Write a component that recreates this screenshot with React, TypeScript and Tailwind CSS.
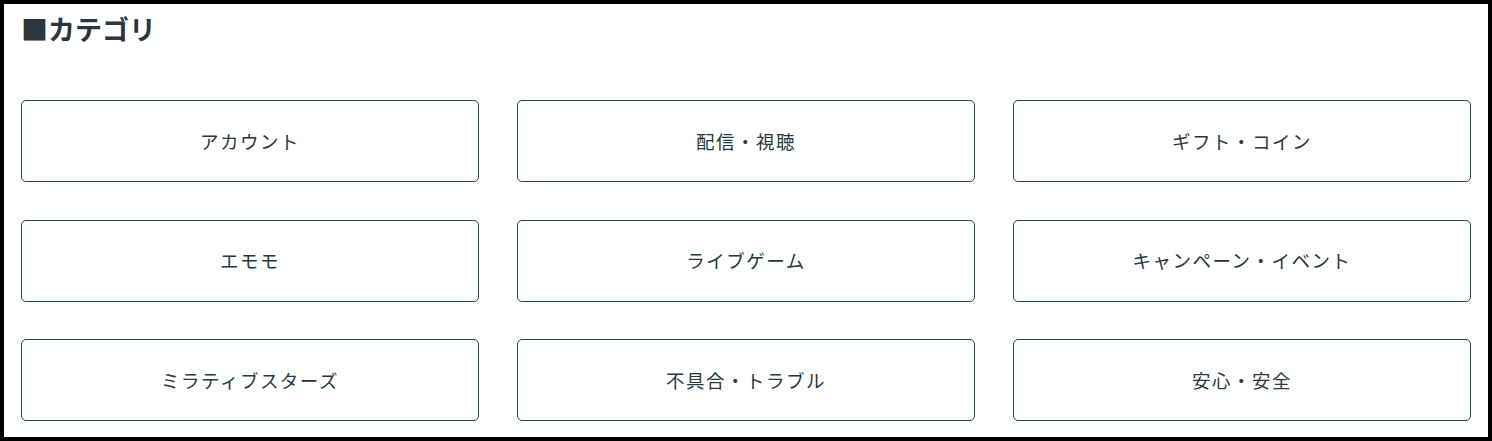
const categories = [
  'アカウント',
  '配信・視聴',
  'ギフト・コイン',
  'エモモ',
  'ライブゲーム',
  'キャンペーン・イベント',
  'ミラティブスターズ',
  '不具合・トラブル',
  '安心・安全',
]

export default function App() {
  return (
    <div
      className="h-[441px] w-[1492px] border-4 border-black bg-white px-[17px]"
      style={{ fontFamily: '"Noto Sans CJK JP", "Noto Sans", sans-serif' }}
    >
      <h2 className="pt-[7px] text-[27px] leading-[36px] font-bold text-[#2c3540]">■カテゴリ</h2>
      <div className="mt-[53px] grid grid-cols-3 gap-x-[38px] gap-y-[37.5px]">
        {categories.map((name) => (
          <a
            key={name}
            href="#"
            className="flex h-[82px] items-center justify-center rounded-[5px] border border-[#1d4a50] pt-px text-[18.5px] tracking-[0.08em] text-[#233a40]"
          >
            {name}
          </a>
        ))}
      </div>
    </div>
  )
}
